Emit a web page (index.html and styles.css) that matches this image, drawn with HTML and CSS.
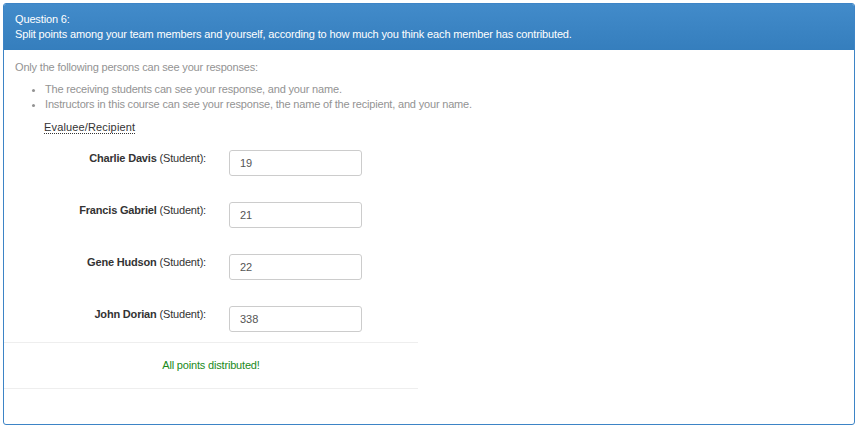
FILE: index.html
```html
<!DOCTYPE html>
<html>
<head>
<meta charset="utf-8">
<link rel="stylesheet" href="styles.css">
</head>
<body>
<div class="panel">
  <div class="panel-heading">
    <div>Question 6:</div>
    <div>Split points among your team members and yourself, according to how much you think each member has contributed.</div>
  </div>
  <div class="panel-body">
    <p class="visibility">Only the following persons can see your responses:</p>
    <ul class="visibility-list">
      <li>The receiving students can see your response, and your name.</li>
      <li>Instructors in this course can see your response, the name of the recipient, and your name.</li>
    </ul>
    <div class="evaluee"><span class="dotted">Evaluee/Recipient</span></div>
    <div class="form">
      <div class="row">
        <div class="label"><b>Charlie Davis</b> (Student):</div>
        <input class="field" type="text" value="19">
      </div>
      <div class="row">
        <div class="label"><b>Francis Gabriel</b> (Student):</div>
        <input class="field" type="text" value="21">
      </div>
      <div class="row">
        <div class="label"><b>Gene Hudson</b> (Student):</div>
        <input class="field" type="text" value="22">
      </div>
      <div class="row">
        <div class="label"><b>John Dorian</b> (Student):</div>
        <input class="field" type="text" value="338">
      </div>
    </div>
    <div class="status">All points distributed!</div>
  </div>
</div>
</body>
</html>
```
FILE: styles.css
```css
html, body {
  margin: 0;
  padding: 0;
  background: #fff;
}
body {
  font-family: "Liberation Sans", Arial, sans-serif;
  font-size: 11px;
  letter-spacing: -0.18px;
  color: #333;
}
.panel {
  margin: 3px;
  width: 852px;
  height: 422px;
  border: 1px solid #3d84c6;
  border-radius: 3px;
  box-sizing: border-box;
  overflow: hidden;
}
.panel-heading {
  background: linear-gradient(to bottom, #428bca 0%, #357ebd 100%);
  color: #fff;
  font-size: 11px;
  letter-spacing: -0.14px;
  line-height: 15px;
  padding: 8px 11px 8px 11px;
  height: 46px;
  box-sizing: border-box;
}
.panel-body {
  padding: 0;
}
.visibility {
  color: #939393;
  margin: 10px 0 0 11px;
  line-height: 15px;
}
.visibility-list {
  color: #939393;
  margin: 7px 0 0 0;
  padding-left: 41px;
  line-height: 15px;
}
.evaluee {
  margin: 8px 0 0 40px;
  line-height: 15px;
  font-weight: 500;
  letter-spacing: 0.15px;
}
.dotted {
  border-bottom: 1px dotted #333;
}
.form {
  width: 414px;
  padding-top: 15px;
}
.row {
  display: flex;
  align-items: flex-start;
  height: 52px;
}
.label {
  width: 202px;
  text-align: right;
  padding-top: 1px;
  line-height: 15px;
}
.field {
  margin-left: 23px;
  width: 133px;
  height: 26px;
  box-sizing: border-box;
  border: 1px solid #ccc;
  border-radius: 3px;
  padding: 0 10px;
  font-family: "Liberation Sans", Arial, sans-serif;
  font-size: 11px;
  color: #555;
}
.status {
  width: 414px;
  margin-top: -16px;
  border-top: 1px solid #eee;
  border-bottom: 1px solid #eee;
  color: #1a8a1a;
  text-align: center;
  height: 45px;
  line-height: 44px;
}
```
